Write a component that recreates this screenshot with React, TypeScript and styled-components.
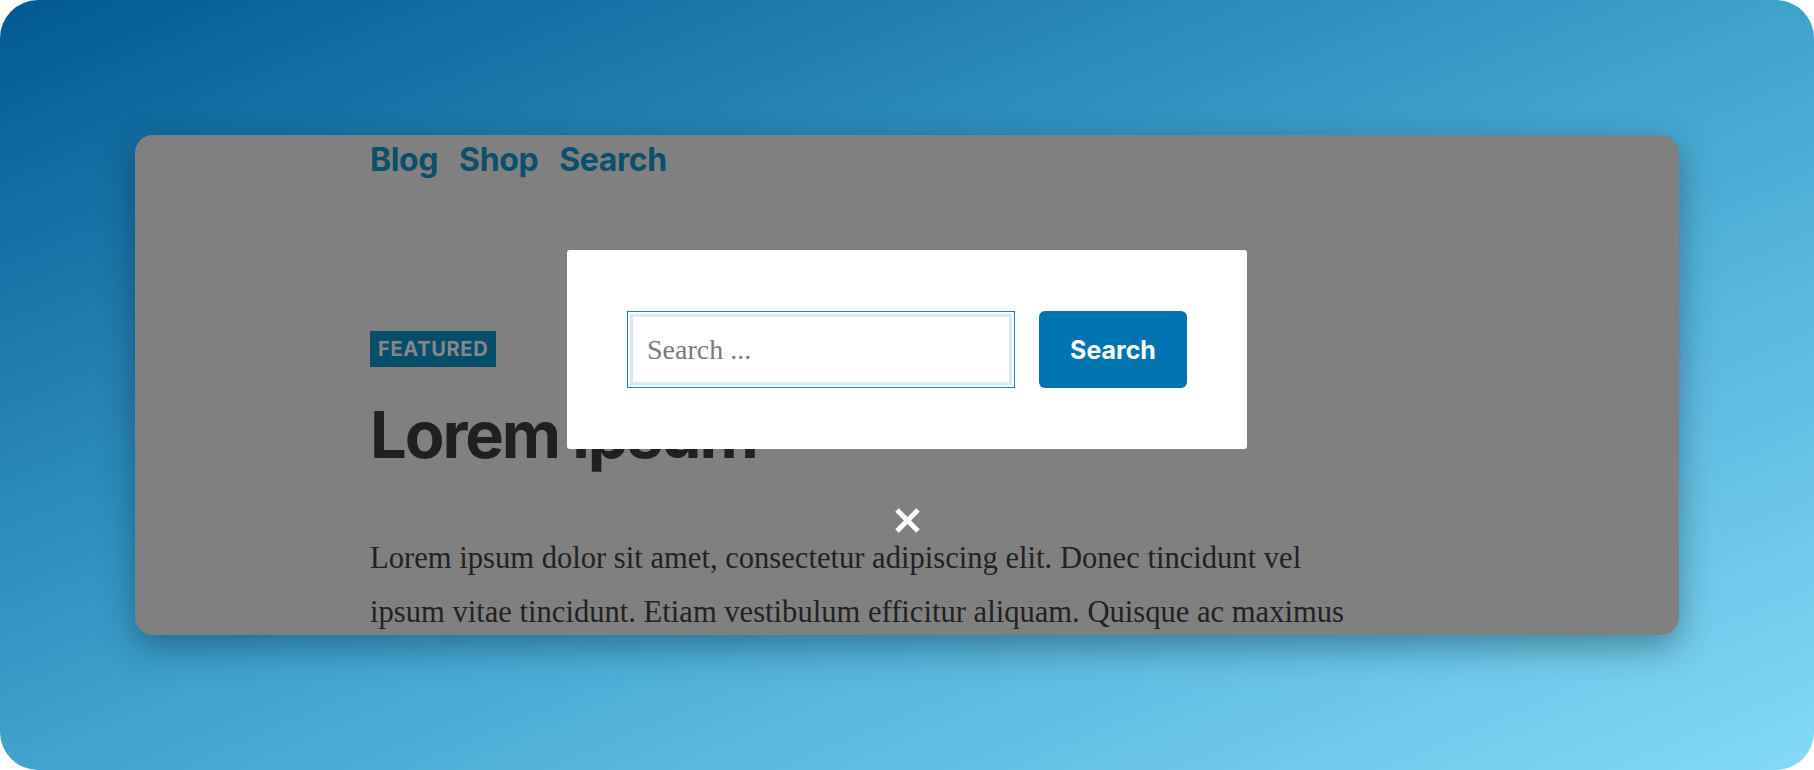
import React from "react";
import styled, { createGlobalStyle } from "styled-components";

const Global = createGlobalStyle`
  html, body { margin: 0; padding: 0; background: #ffffff; }
  * { box-sizing: border-box; }
`;

const Frame = styled.div`
  width: 1814px;
  height: 770px;
  border-radius: 38px;
  overflow: hidden;
  background: linear-gradient(to bottom right, #025a90 0%, #3fa3cd 50%, #84daf5 100%);
  padding: 135px;
  display: flex;
`;

const Card = styled.div`
  position: relative;
  flex: 1;
  border-radius: 18px;
  overflow: hidden;
  background: #808080;
  box-shadow: 0 12px 34px rgba(0, 20, 40, 0.38);
`;

const Page = styled.div`
  padding: 5px 0 0 235px;
`;

const Nav = styled.nav`
  display: flex;
  gap: 21px;
  font-family: Inter, "Liberation Sans", sans-serif;
  font-weight: 700;
  font-size: 32px;
  line-height: 40px;
  letter-spacing: -0.4px;
  color: #0a4f6b;
`;

const NavLink = styled.span``;

const Badge = styled.div`
  display: inline-block;
  margin-top: 151px;
  height: 36px;
  padding: 0 8px;
  background: #064e6a;
  color: #878787;
  font-family: Inter, "Liberation Sans", sans-serif;
  font-weight: 700;
  font-size: 20px;
  line-height: 36px;
  letter-spacing: 0.7px;
`;

const Heading = styled.h1`
  margin: 29px 0 0;
  font-family: Inter, "Liberation Sans", sans-serif;
  font-weight: 700;
  font-size: 65px;
  line-height: 77px;
  letter-spacing: -2.1px;
  color: #202020;
`;

const Paragraph = styled.p`
  margin: 58px 0 0;
  width: 985px;
  font-family: "Liberation Serif", serif;
  font-size: 30.6px;
  line-height: 54px;
  color: #222222;
`;

const Overlay = styled.div`
  position: absolute;
  inset: 0;
  display: flex;
  flex-direction: column;
  align-items: center;
`;

const Modal = styled.div`
  margin-top: 115px;
  width: 680px;
  height: 199px;
  background: #ffffff;
  border-radius: 3px;
  padding: 61px 60px;
  display: flex;
  gap: 24px;
`;

const SearchInput = styled.div`
  flex: 1;
  height: 77px;
  border: 1px solid #1f7db6;
  box-shadow: inset 0 0 0 2px #ffffff, inset 0 0 0 5px #d9e9f4;
  display: flex;
  align-items: center;
  padding-left: 19px;
  font-family: "Liberation Serif", serif;
  font-size: 28px;
  color: #7a7a7a;
`;

const SearchButton = styled.button`
  width: 148px;
  height: 77px;
  border: none;
  border-radius: 6px;
  background: #0073b1;
  color: #ffffff;
  font-family: Inter, "Liberation Sans", sans-serif;
  font-weight: 700;
  font-size: 25px;
  padding: 0;
  cursor: pointer;
`;

const Close = styled.button`
  margin-top: 59px;
  width: 27px;
  height: 25px;
  padding: 0;
  border: none;
  background: transparent;
  display: flex;
`;

export default function App() {
  return (
    <>
      <Global />
      <Frame>
        <Card>
          <Page>
            <Nav>
              <NavLink>Blog</NavLink>
              <NavLink>Shop</NavLink>
              <NavLink>Search</NavLink>
            </Nav>
            <Badge>FEATURED</Badge>
            <Heading>Lorem ipsum</Heading>
            <Paragraph>
              Lorem ipsum dolor sit amet, consectetur adipiscing elit. Donec tincidunt vel
              ipsum vitae tincidunt. Etiam vestibulum efficitur aliquam. Quisque ac maximus
            </Paragraph>
          </Page>
          <Overlay>
            <Modal>
              <SearchInput>Search ...</SearchInput>
              <SearchButton>Search</SearchButton>
            </Modal>
            <Close aria-label="Close">
              <svg width="27" height="25" viewBox="0 0 27 25">
                <path d="M3 2 L24 23 M24 2 L3 23" stroke="#ffffff" strokeWidth="5" fill="none" />
              </svg>
            </Close>
          </Overlay>
        </Card>
      </Frame>
    </>
  );
}
